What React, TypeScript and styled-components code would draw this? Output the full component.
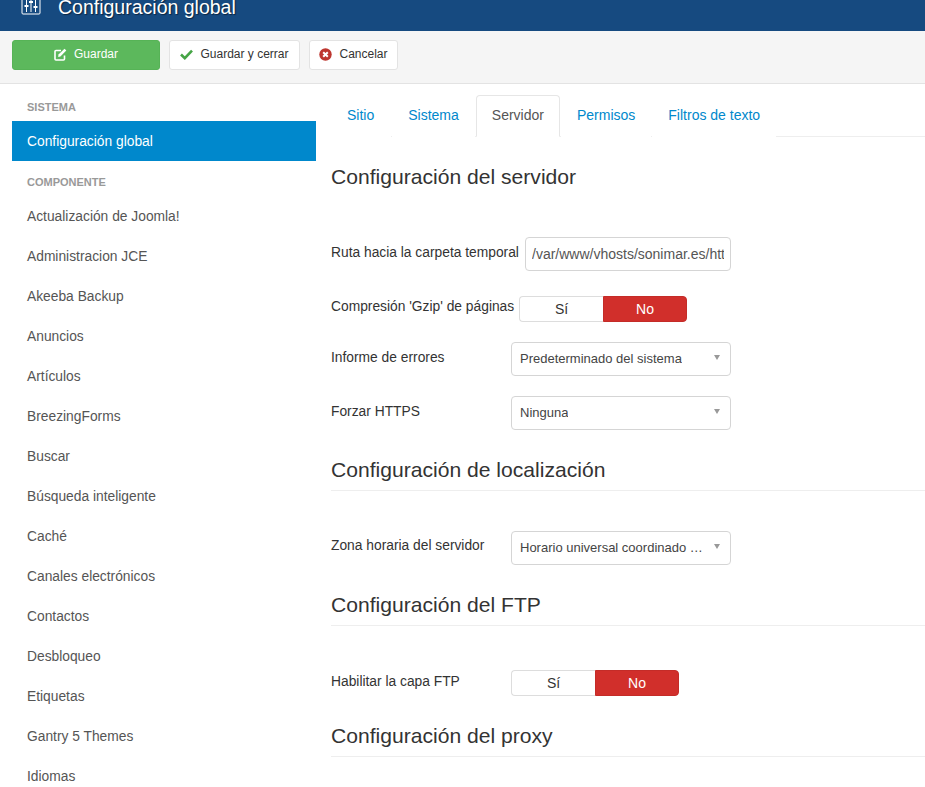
import React from "react";
import styled, { createGlobalStyle } from "styled-components";

const Global = createGlobalStyle`
  html, body { margin: 0; padding: 0; height: 787px; overflow: hidden; background: #fff; }
  body { font-family: "Liberation Sans", Arial, sans-serif; font-size: 14px; color: #333; }
  * { box-sizing: border-box; }
`;

const Header = styled.header`
  height: 31px; background: #164a80; color: #fff;
  display: flex; align-items: flex-end; padding: 0 0 12px 21px; gap: 17px;
`;
const HeaderTitle = styled.h1`
  margin: 0; font-size: 19.5px; line-height: 24px; font-weight: 400; color: #fff;
  text-shadow: 1px 1px 1px rgba(0,0,0,.5); height: 19px;
  display: flex; align-items: flex-end;
`;
const HeaderIcon = styled.svg`width: 20px; height: 20px; flex: none; margin-bottom: 4px;`;

const Toolbar = styled.div`
  height: 53px; background: #f5f5f5; border-bottom: 1px solid #e3e3e3;
  display: flex; align-items: center; padding: 0 12px 4px; gap: 9px;
`;
const ToolButton = styled.div<{ $primary?: boolean; $w: number }>`
  width: ${p => p.$w}px; height: 30px; border-radius: 3px; font-size: 12px;
  display: flex; align-items: center; justify-content: center; gap: 7px; padding-bottom: 2px;
  background: ${p => (p.$primary ? "#5cb85c" : "#fff")};
  color: ${p => (p.$primary ? "#fff" : "#333")};
  border: 1px solid ${p => (p.$primary ? "#56b356" : "#e3e3e3")};
`;

const Layout = styled.div`display: flex; align-items: flex-start;`;
const Sidebar = styled.nav`width: 304px; margin-left: 12px; flex: none; padding-top: 15px;`;
const SideHead = styled.div`
  font-size: 11px; line-height: 16px; font-weight: 700; color: #999; padding-left: 15px;
  text-transform: uppercase; margin-bottom: 6px;
`;
const SideHeadSecond = styled(SideHead)`margin-top: 13px; margin-bottom: 6px;`;
const SideItem = styled.div<{ $active?: boolean }>`
  height: 40px; line-height: 41px; padding-left: 15px; font-size: 13.8px;
  background: ${p => (p.$active ? "#0088cc" : "transparent")};
  color: ${p => (p.$active ? "#fff" : "#555")};
`;

const Main = styled.main`flex: 1; margin-left: 15px; padding-top: 11px; min-width: 0;`;
const Tabs = styled.div`
  display: flex; height: 42px; border-bottom: 1px solid #eee;
`;
const Tab = styled.div<{ $active?: boolean }>`
  height: 42px; padding: 0 15px; line-height: 38px; font-size: 14px; margin-right: 1px;
  color: ${p => (p.$active ? "#555" : "#0088cc")};
  border: 1px solid ${p => (p.$active ? "#e6e6e6" : "transparent")};
  border-bottom-color: ${p => (p.$active ? "#fff" : "transparent")};
  border-radius: 4px 4px 0 0; background: #fff;
  &:first-child { padding-right: 16px; }
`;

const Section = styled.h3<{ $plain?: boolean; $top: number; $bottom: number }>`
  margin: ${p => p.$top}px 0 ${p => p.$bottom}px; font-size: 21.1px; line-height: 24px; font-weight: 400; color: #333;
  padding-bottom: 8px;
  border-bottom: 1px solid ${p => (p.$plain ? "transparent" : "#eee")};
`;

const Row = styled.div<{ $h: number; $mb?: number }>`
  display: flex; align-items: center; height: ${p => p.$h}px; margin-bottom: ${p => p.$mb ?? 0}px;
`;
const Label = styled.label<{ $w: number; $shift?: number }>`
  width: ${p => p.$w}px; flex: none; font-size: 13.8px; color: #333; white-space: nowrap;
  padding-bottom: ${p => p.$shift ?? 0}px;
`;
const TextInput = styled.input`
  width: 206px; height: 34px; border: 1px solid #d5d5d5; border-radius: 4px;
  padding: 0 6px; font-family: inherit; font-size: 14px; color: #555; background: #fff; outline: none;
`;
const Select = styled.div`
  width: 220px; height: 34px; line-height: 32px; border: 1px solid #d5d5d5; border-radius: 4px;
  padding: 0 8px; font-size: 13px; color: #444; background: #fff; display: flex; align-items: center;
  justify-content: space-between;
`;
const SelectValue = styled.span`overflow: hidden; white-space: nowrap;`;
const Caret = styled.span`
  width: 0; height: 0; border-left: 3px solid transparent; border-right: 3px solid transparent;
  border-top: 5px solid #999; margin-right: 2px; margin-bottom: 3px; flex: none;
`;
const Toggle = styled.div`
  display: flex; height: 26px; width: 168px; font-size: 14px;
`;
const Yes = styled.div`
  width: 84px; border: 1px solid #ddd; border-right: 0; border-radius: 4px 0 0 4px;
  text-align: center; line-height: 25px; color: #333; background: #fff;
`;
const No = styled.div`
  width: 84px; background: #d12f2b; border: 1px solid #c42c28; border-radius: 0 4px 4px 0;
  text-align: center; line-height: 25px; color: #fff;
`;

const items = ["Actualización de Joomla!", "Administracion JCE", "Akeeba Backup", "Anuncios", "Artículos", "BreezingForms", "Buscar", "Búsqueda inteligente", "Caché", "Canales electrónicos", "Contactos", "Desbloqueo", "Etiquetas", "Gantry 5 Themes", "Idiomas"];

export default function App() {
  return (
    <>
      <Global />
      <Header>
        <HeaderIcon viewBox="0 0 20 20" fill="none" stroke="#fff" strokeWidth="1">
          <rect x="1" y="1" width="18" height="18" rx="1" />
          <path d="M5.5 3v14M10 3v14M14.5 3v14" />
          <path d="M3.5 11h4M8 7h4M12.5 12h4" strokeWidth="2" />
        </HeaderIcon>
        <HeaderTitle>Configuración global</HeaderTitle>
      </Header>
      <Toolbar>
        <ToolButton $primary $w={148}>
          <svg width="13" height="13" viewBox="0 0 13 13" fill="none" stroke="#fff">
            <path d="M10.5 7.5V11a1 1 0 0 1-1 1H2a1 1 0 0 1-1-1V3.5a1 1 0 0 1 1-1h5" strokeWidth="1.6" />
            <path d="M4.5 6.5 10.5 .8 12.3 2.6 6.4 8.5 4.2 9z" fill="#fff" stroke="none" />
          </svg>
          Guardar
        </ToolButton>
        <ToolButton $w={131}>
          <svg width="13" height="11" viewBox="0 0 13 11" fill="none" stroke="#46a546" strokeWidth="2.6">
            <path d="M1 5.5 4.8 9.2 12 1.6" />
          </svg>
          Guardar y cerrar
        </ToolButton>
        <ToolButton $w={89}>
          <svg width="13" height="13" viewBox="0 0 13 13">
            <circle cx="6.5" cy="6.5" r="6.2" fill="#bd362f" />
            <path d="M4.2 4.2 8.8 8.8M8.8 4.2 4.2 8.8" stroke="#fff" strokeWidth="2" />
          </svg>
          Cancelar
        </ToolButton>
      </Toolbar>
      <Layout>
        <Sidebar>
          <SideHead>Sistema</SideHead>
          <SideItem $active>Configuración global</SideItem>
          <SideHeadSecond>Componente</SideHeadSecond>
          {items.map(i => <SideItem key={i}>{i}</SideItem>)}
        </Sidebar>
        <Main>
          <Tabs>
            <Tab>Sitio</Tab>
            <Tab>Sistema</Tab>
            <Tab $active>Servidor</Tab>
            <Tab>Permisos</Tab>
            <Tab>Filtros de texto</Tab>
          </Tabs>
          <Section $plain $top={28} $bottom={39}>Configuración del servidor</Section>
          <Row $h={34} $mb={25}>
            <Label $w={194} $shift={4}>Ruta hacia la carpeta temporal</Label>
            <TextInput readOnly value="/var/www/vhosts/sonimar.es/httpdocs/tmp" />
          </Row>
          <Row $h={26} $mb={20}>
            <Label $w={188} $shift={5}>Compresión 'Gzip' de páginas</Label>
            <Toggle><Yes>Sí</Yes><No>No</No></Toggle>
          </Row>
          <Row $h={34} $mb={20}>
            <Label $w={180} $shift={4}>Informe de errores</Label>
            <Select><SelectValue>Predeterminado del sistema</SelectValue><Caret /></Select>
          </Row>
          <Row $h={34} $mb={0}>
            <Label $w={180} $shift={4}>Forzar HTTPS</Label>
            <Select><SelectValue>Ninguna</SelectValue><Caret /></Select>
          </Row>
          <Section $top={28} $bottom={40}>Configuración de localización</Section>
          <Row $h={34} $mb={0}>
            <Label $w={180} $shift={6}>Zona horaria del servidor</Label>
            <Select><SelectValue>Horario universal coordinado …</SelectValue><Caret /></Select>
          </Row>
          <Section $top={28} $bottom={44}>Configuración del FTP</Section>
          <Row $h={26} $mb={0}>
            <Label $w={180} $shift={4}>Habilitar la capa FTP</Label>
            <Toggle><Yes>Sí</Yes><No>No</No></Toggle>
          </Row>
          <Section $top={28} $bottom={0}>Configuración del proxy</Section>
        </Main>
      </Layout>
    </>
  );
}
